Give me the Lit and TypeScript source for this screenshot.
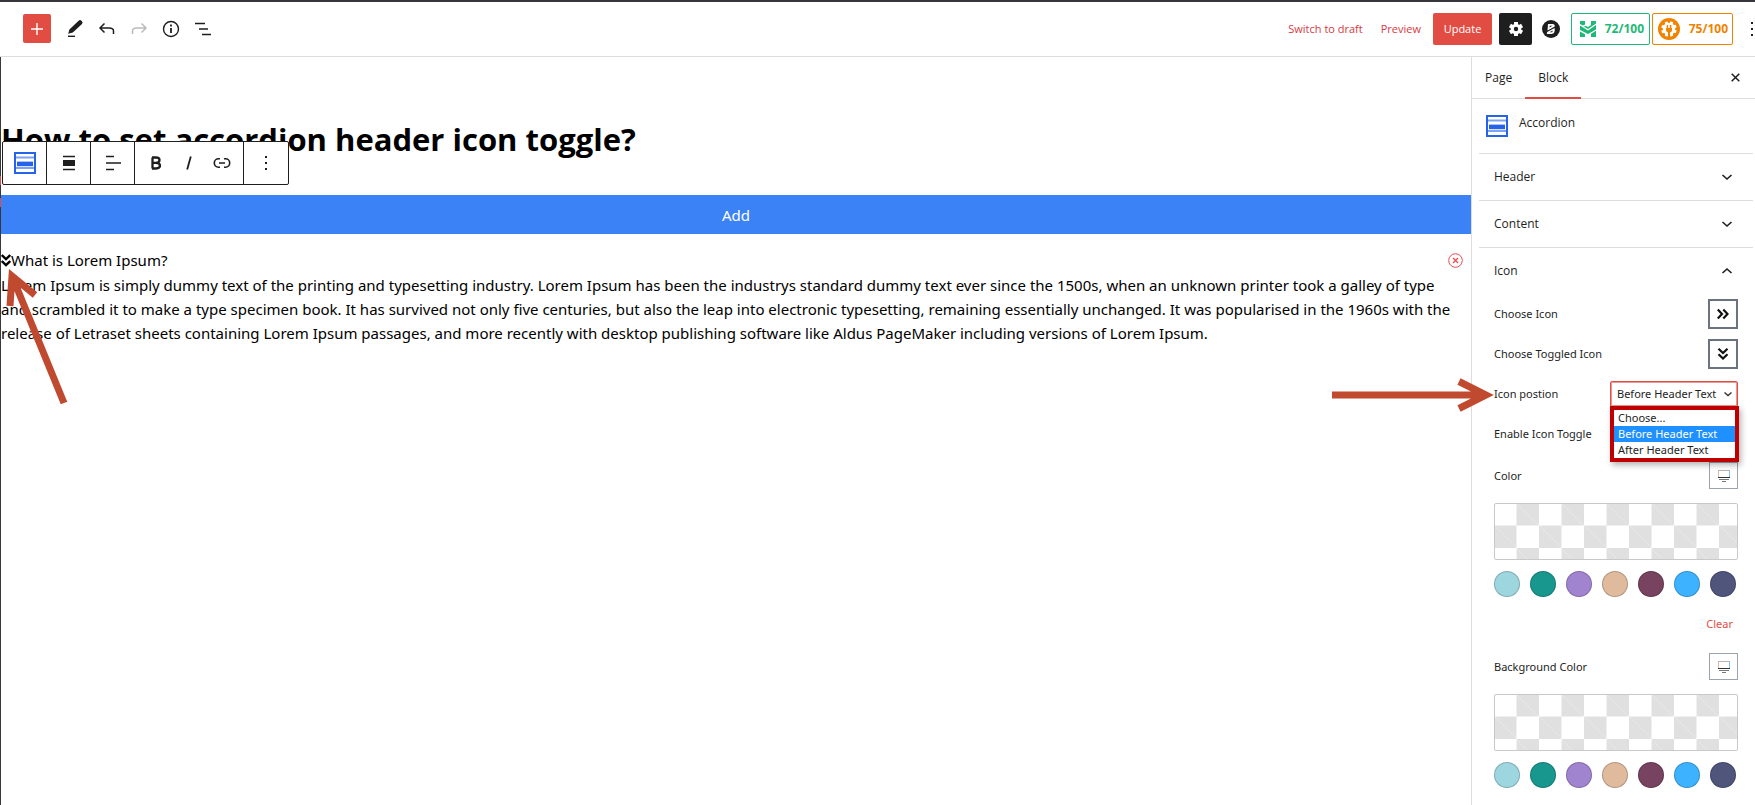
import { LitElement, html, css, svg } from "lit";
import { customElement, property, state } from "lit/decorators.js";
import { classMap } from "lit/directives/class-map.js";

const base = css`
  :host, * { box-sizing: border-box; }
  button {
    font: inherit;
    color: inherit;
    background: none;
    border: 0;
    padding: 0;
    margin: 0;
    display: flex;
    align-items: center;
    justify-content: center;
    cursor: pointer;
  }
  svg { display: block; flex: none; }
`;

const accordionIcon = html`<svg width="22" height="22" viewBox="0 0 22 22" aria-hidden="true">
  <rect x="1" y="1" width="20" height="20" fill="#fff" stroke="#2563eb" stroke-width="2" />
  <path d="M2 5.5h18M2 16h18" stroke="#7ea3f3" stroke-width="2" />
  <path d="M3 9.5h16M3 14h16" stroke="#a9c2f8" stroke-width="1" />
  <rect x="3" y="10" width="16" height="4" fill="#2563eb" />
</svg>`;

const doubleChevron = (down: boolean) => html`<svg width="14" height="14" viewBox="0 0 14 14" aria-hidden="true">
  <g transform=${down ? "rotate(90 7 7)" : ""} fill="none" stroke="#111" stroke-width="2.2">
    <path d="M1.8 2.5 6 7l-4.2 4.5M7.3 2.5 11.5 7l-4.2 4.5" />
  </g>
</svg>`;

const chevron = (up: boolean) => html`<svg width="12" height="12" viewBox="0 0 12 12" aria-hidden="true">
  <path d=${up ? "M1.5 8 6 4l4.5 4" : "M1.5 4 6 8l4.5-4"} fill="none" stroke="#1e1e1e" stroke-width="1.6" />
</svg>`;

const gearTeeth = [0, 60, 120, 180, 240, 300];

@customElement("editor-header")
class EditorHeader extends LitElement {
  static styles = [
    base,
    css`
      :host {
        display: flex;
        align-items: center;
        justify-content: space-between;
        height: 57px;
        padding: 0 0 1px 23px;
        border-top: 2px solid #36383e;
        border-bottom: 1px solid #ddd;
        overflow: hidden;
        font-size: 11px;
        background: #fff;
      }
      .group { display: flex; align-items: center; }
      .tools { gap: 8px; }
      .tool { width: 24px; height: 24px; }
      .add { width: 28px; height: 29px; background: #e14d43; border-radius: 2px; margin-right: 4px; }
      .link { color: #d9393f; text-decoration: none; margin-right: 18px; }
      .link.last { margin-right: 12px; }
      .update { width: 59px; height: 32px; background: #e14d43; color: #fff; border-radius: 2px; margin-right: 7px; }
      .settings { width: 33px; height: 32px; background: #1e1e1e; border-radius: 2px; margin-right: 10px; }
      .brand { margin-right: 11px; }
      .score { height: 32px; border: 1px solid; border-radius: 2px; font-size: 12px; font-weight: 700; justify-content: space-between; }
      .seo { width: 79px; color: #1fb877; padding: 0 5px 0 8px; margin-right: 2px; }
      .rank { width: 81px; color: #f08300; padding: 0 4px 0 5px; }
    `,
  ];

  render() {
    return html`
      <div class="group tools">
        <button class="add" aria-label="Add block">
          <svg width="12" height="12" viewBox="0 0 12 12"><path d="M6 0v12M0 6h12" stroke="#fff" stroke-width="1.4" /></svg>
        </button>
        <button class="tool" aria-label="Edit">
          <svg width="24" height="24" viewBox="0 0 24 24">
            <path d="M5.200 16.800 6.400 12.400 15.600 3.800Q17 2.400 18.700 3.900T19 7L9.800 15.400z" fill="#1e1e1e" />
            <path d="M5 19.300h7" stroke="#1e1e1e" stroke-width="1.4" />
          </svg>
        </button>
        <button class="tool" aria-label="Undo">
          <svg width="24" height="24" viewBox="0 0 24 24"><path d="M9.5 6.5 5 11l4.500 4.500M5.500 11H14Q18.500 11 18.500 14v3" fill="none" stroke="#1e1e1e" stroke-width="1.5" /></svg>
        </button>
        <button class="tool" aria-label="Redo">
          <svg width="24" height="24" viewBox="0 0 24 24"><path d="M14.500 6.500 19 11l-4.500 4.500M18.500 11H10Q5.500 11 5.500 14v3" fill="none" stroke="#bbb" stroke-width="1.5" /></svg>
        </button>
        <button class="tool" aria-label="Details">
          <svg width="24" height="24" viewBox="0 0 24 24">
            <circle cx="12" cy="12" r="7.500" fill="none" stroke="#1e1e1e" stroke-width="1.4" />
            <path d="M12 11v5M12 7.500v2" stroke="#1e1e1e" stroke-width="1.8" />
          </svg>
        </button>
        <button class="tool" aria-label="List view">
          <svg width="24" height="24" viewBox="0 0 24 24"><path d="M4 6.500h10M8 12h9M11 17.500h9" stroke="#1e1e1e" stroke-width="1.5" /></svg>
        </button>
      </div>
      <div class="group">
        <a class="link" href="#draft">Switch to draft</a>
        <a class="link last" href="#preview">Preview</a>
        <button class="update">Update</button>
        <button class="settings" aria-label="Settings">
          <svg width="16" height="16" viewBox="-8 -8 16 16">
            ${gearTeeth.map((a) => svg`<rect x="-2" y="-7" width="4" height="5" fill="#fff" transform="rotate(${a})" />`)}
            <circle r="5.300" fill="#fff" /><circle r="2.200" fill="#1e1e1e" />
          </svg>
        </button>
        <button class="brand" aria-label="Page builder">
          <svg width="18" height="18" viewBox="0 0 18 18">
            <circle cx="9" cy="9" r="9" fill="#1e1e1e" />
            <path d="M6 4h4.500Q13 4.200 12.800 6.500L5.500 10.500zM5.200 12 12.600 8Q13.600 13.500 9.500 14H4.800z" fill="#fff" />
            <path d="M7.800 5.700h2.700L7.500 7.500zM7.500 12.300l3.300-1.800-.6 1.800z" fill="#1e1e1e" />
          </svg>
        </button>
        <button class="score seo" aria-label="SEO score 72 of 100">
          <svg width="16" height="16" viewBox="0 0 16 16" fill="#1fb877">
            <path d="M0 0h5v3.500L3 4.500 0 3zM11 0h5v2.500L8 8 4 5.800 5.500 4.800 8 6l3-2z" />
            <path d="M0 4.500 8 9.500 16 4V8.500L8 13 0 9z" />
            <path d="M0 10.500 5 13.300V16H0zM11 12.800l5-3V16h-5z" />
          </svg>
          <span>72/100</span>
        </button>
        <button class="score rank" aria-label="Content score 75 of 100">
          <svg width="22" height="22" viewBox="-11 -11 22 22">
            <circle r="11" fill="#f08300" />
            ${[22, 67, 112, 157, 202, 247, 292, 337].map(
              (a) => svg`<rect x="-1.500" y="-7.800" width="3" height="4" rx=".6" fill="#fff" transform="rotate(${a})" />`
            )}
            <circle r="6.200" fill="#fff" />
            <path d="M-3-1H3V1Q3 3 1 3.500V7H-1V3.500Q-3 3-3 1zM-2.300-4h1.500v3h-1.500zM.8-4h1.500v3H.8z" fill="#f08300" />
          </svg>
          <span>75/100</span>
        </button>
        <button aria-label="Options">
          <svg width="22" height="16" viewBox="0 0 22 16"><path d="M18 1h2v2h-2zM18 7h2v2h-2zM18 13h2v2h-2z" fill="#1e1e1e" /></svg>
        </button>
      </div>
    `;
  }
}

@customElement("block-toolbar")
class BlockToolbar extends LitElement {
  static styles = [
    base,
    css`
      :host {
        display: flex;
        height: 44px;
        background: #fff;
        border: 1px solid #1e1e1e;
        border-radius: 2px;
      }
      .cell { width: 44px; display: flex; align-items: center; justify-content: center; border-right: 1px solid #1e1e1e; }
      .cell:last-child { border-right: 0; }
      .format { width: 109px; padding: 0 5px; }
      .format button { width: 33px; height: 36px; }
    `,
  ];

  render() {
    return html`
      <button class="cell" aria-label="Accordion">${accordionIcon}</button>
      <button class="cell" aria-label="Align">
        <svg width="24" height="24" viewBox="0 0 24 24"><path d="M6 5.500h12M6 18.500h12" stroke="#1e1e1e" stroke-width="1.400" /><path d="M6 9h12v6H6z" fill="#1e1e1e" /></svg>
      </button>
      <button class="cell" aria-label="Align text">
        <svg width="24" height="24" viewBox="0 0 24 24"><path d="M5 5.500h8M5 12h15M5 18.500h8" stroke="#1e1e1e" stroke-width="1.400" /></svg>
      </button>
      <div class="cell format">
        <button aria-label="Bold">
          <svg width="24" height="24" viewBox="0 0 24 24"><path d="M8.500 6.500V17.500M8 6.500h4Q15.500 6.500 15.500 9.100T12 11.800H8.500M12 11.800Q16 11.800 16 14.600T12 17.500H8" fill="none" stroke="#1e1e1e" stroke-width="2.300" /></svg>
        </button>
        <button aria-label="Italic">
          <svg width="24" height="24" viewBox="0 0 24 24"><path d="M13.800 5.500 10.200 18.500" stroke="#1e1e1e" stroke-width="1.800" /></svg>
        </button>
        <button aria-label="Link">
          <svg width="24" height="24" viewBox="0 0 24 24"><path d="M10 7.800H8.500a4.200 4.200 0 0 0 0 8.400H10M14 7.800h1.500a4.200 4.200 0 0 1 0 8.400H14M9 12h6" fill="none" stroke="#1e1e1e" stroke-width="1.600" /></svg>
        </button>
      </div>
      <button class="cell" aria-label="More options">
        <svg width="4" height="14" viewBox="0 0 4 14"><path d="M1 0h2v2H1zM1 6h2v2H1zM1 12h2v2H1z" fill="#1e1e1e" /></svg>
      </button>
    `;
  }
}

@customElement("editor-canvas")
class EditorCanvas extends LitElement {
  static styles = [
    base,
    css`
      :host { display: block; border-left: 1px solid #36383e; color: #000; font-size: 15px; line-height: 24px; font-family: "Noto Sans", "Open Sans", sans-serif; }
      .heading { position: relative; padding-top: 60px; height: 138px; }
      .title { margin: 0; font-family: "Open Sans", "Noto Sans", sans-serif; font-size: 31px; line-height: 44px; font-weight: 700; white-space: nowrap; }
      .toolbar { position: absolute; left: 1px; top: 84px; }
      .mark { position: absolute; left: -1px; width: 1px; height: 9px; background: #e14d43; }
      .mark.first { top: 119px; }
      .mark.second { top: 141px; }
      .add { width: 100%; height: 39px; background: #3b82f6; color: #fff; }
      .item { position: relative; padding-top: 14px; }
      .question { display: flex; align-items: center; }
      .remove { margin-left: auto; margin-right: 8px; }
      .answer { margin: 1px 0 0; white-space: nowrap; }
      .arrow { position: absolute; left: 4px; top: 32px; }
    `,
  ];

  render() {
    return html`
      <div class="heading">
        <h1 class="title">How to set accordion header icon toggle?</h1>
        <block-toolbar class="toolbar"></block-toolbar>
        <span class="mark first"></span>
        <span class="mark second"></span>
      </div>
      <button class="add">Add</button>
      <section class="item">
        <div class="question">
          <svg width="10" height="14" viewBox="0 0 10 14" aria-hidden="true">
            <path d="M.8 2 5 6l4.200-4M.8 8 5 12l4.200-4" fill="none" stroke="#000" stroke-width="2.400" />
          </svg>
          <span>What is Lorem Ipsum?</span>
          <button class="remove" aria-label="Remove item">
            <svg width="15" height="15" viewBox="0 0 15 15"><circle cx="7.500" cy="7.500" r="6.800" fill="none" stroke="#ea4b50" /><path d="m5 5 5 5M10 5l-5 5" stroke="#ea4b50" stroke-width="1.300" /></svg>
          </button>
        </div>
        <p class="answer">
          Lorem Ipsum is simply dummy text of the printing and typesetting industry. Lorem Ipsum has been the industrys standard dummy text ever since the 1500s, when an unknown printer took a galley of type<br />
          and scrambled it to make a type specimen book. It has survived not only five centuries, but also the leap into electronic typesetting, remaining essentially unchanged. It was popularised in the 1960s with the<br />
          release of Letraset sheets containing Lorem Ipsum passages, and more recently with desktop publishing software like Aldus PageMaker including versions of Lorem Ipsum.
        </p>
        <svg class="arrow" width="70" height="140" viewBox="0 0 70 140" aria-hidden="true">
          <path d="M59 137 7 10M5 40 7 10 30 29" fill="none" stroke="#c04a30" stroke-width="7" stroke-miterlimit="10" />
        </svg>
      </section>
    `;
  }
}

@customElement("color-field")
class ColorField extends LitElement {
  @property() label = "";
  @property({ type: Boolean }) clearable = false;

  private swatches = ["#9dd6df", "#18978f", "#a084cf", "#dfba9d", "#774360", "#3db2ff", "#50557c"];

  static styles = [
    base,
    css`
      :host { display: block; }
      .top { display: flex; align-items: center; justify-content: space-between; }
      .device { width: 29px; height: 27px; border: 1px solid #9ca3af; }
      .preview {
        width: 100%;
        height: 57px;
        margin: 14px 0 11px;
        border: 1px solid #c9c9c9;
        border-radius: 2px;
        background-origin: border-box;
        background-image:
          repeating-linear-gradient(45deg, #e0e0e0 25%, transparent 0, transparent 75%, #e0e0e0 0, #e0e0e0),
          repeating-linear-gradient(45deg, #e0e0e0 25%, transparent 0, transparent 75%, #e0e0e0 0, #e0e0e0);
        background-size: 45px 45px;
        background-position: 0 0, calc(45px / 2) calc(45px / 2);
      }
      .swatches { display: flex; gap: 10px; }
      .swatch { width: 26px; height: 26px; flex: none; border-radius: 50%; border: 1px solid rgba(0, 0, 0, 0.2); }
      .clear { margin: 15px 5px 0 auto; height: 24px; color: #e14d43; }
    `,
  ];

  render() {
    return html`
      <div class="top">
        <span>${this.label}</span>
        <button class="device" aria-label="Desktop">
          <svg width="14" height="14" viewBox="0 0 14 14">
            <path d="M1.500 1v8" stroke="#e2b9a0" /><path d="M12.500 1v8" stroke="#7cc3e6" /><path d="M1 1.500h12" stroke="#b9b3b3" />
            <path d="M1 8.500h12" stroke="#333" /><path d="M2 10.500h10M5 12.500h4" stroke="#777" />
          </svg>
        </button>
      </div>
      <button class="preview" aria-label="${this.label} picker"></button>
      <div class="swatches">
        ${this.swatches.map((c) => html`<button class="swatch" aria-label=${c} style="background:${c}"></button>`)}
      </div>
      ${this.clearable ? html`<button class="clear">Clear</button>` : ""}
    `;
  }
}

@customElement("block-settings")
class BlockSettings extends LitElement {
  @state() private position = "Before Header Text";
  private options = ["Choose...", "Before Header Text", "After Header Text"];

  static styles = [
    base,
    css`
      :host { display: block; border-left: 1px solid #ddd; font-size: 12px; line-height: 16px; color: #1e1e1e; background: #fff; }
      .tabs { display: flex; height: 42px; border-bottom: 1px solid #ddd; }
      .tab { padding: 0 13px; }
      .tab.active { border-bottom: 2px solid #e14d43; border-top: 2px solid transparent; height: 42px; }
      .close { margin-left: auto; padding: 0 15px; }
      .card { display: flex; gap: 11px; height: 55px; margin: 0 2px 0 7px; padding: 16px 7px; border-bottom: 1px solid #ddd; }
      .section { margin: 0 2px 0 7px; border-bottom: 1px solid #ddd; }
      .section.open { border-bottom: 0; }
      .heading { width: 100%; height: 46px; padding: 0 20px 0 15px; justify-content: space-between; }
      .fields { padding: 0 15px 16px 15px; font-family: "Noto Sans", "Open Sans", sans-serif; font-size: 11px; }
      .field { position: relative; display: flex; align-items: center; justify-content: space-between; height: 40px; }
      .pick { width: 30px; height: 30px; border: 2px solid #6b7280; }
      .control { position: relative; display: flex; align-items: center; width: 128px; }
      .select {
        appearance: none;
        width: 100%;
        height: 26px;
        padding: 0 20px 0 6px;
        border: 1px solid #e14d43;
        border-radius: 2px;
        box-shadow: inset 0 0 0 1px #e99a94;
        background: #fff;
        color: #1e1e1e;
        font: inherit;
      }
      .caret { position: absolute; right: 5px; pointer-events: none; }
      .options {
        position: absolute;
        z-index: 1;
        top: 100%;
        left: 0;
        width: 129px;
        margin: -1px 0 0;
        padding: 0;
        list-style: none;
        border: 4px solid #c00000;
        background: #fff;
        box-shadow: 2px 3px 6px rgba(0, 0, 0, 0.3);
        line-height: 16px;
      }
      .option { padding: 0 4px; white-space: nowrap; }
      .option.selected { background: #1e90ff; color: #fff; }
      .arrow { position: absolute; right: 100%; top: 4px; }
      .color { margin-top: 8px; }
      .color.next { margin-top: 17px; }
    `,
  ];

  render() {
    return html`
      <div class="tabs">
        <button class="tab">Page</button>
        <button class="tab active">Block</button>
        <button class="close" aria-label="Close settings">
          <svg width="9" height="9" viewBox="0 0 9 9"><path d="m.7.7 7.600 7.600M8.300.7.7 8.300" stroke="#1e1e1e" stroke-width="1.500" /></svg>
        </button>
      </div>
      <div class="card">${accordionIcon}<span>Accordion</span></div>
      <section class="section"><button class="heading">Header ${chevron(false)}</button></section>
      <section class="section"><button class="heading">Content ${chevron(false)}</button></section>
      <section class="section open">
        <button class="heading">Icon ${chevron(true)}</button>
        <div class="fields">
          <div class="field"><span>Choose Icon</span><button class="pick" aria-label="Choose Icon">${doubleChevron(false)}</button></div>
          <div class="field"><span>Choose Toggled Icon</span><button class="pick" aria-label="Choose Toggled Icon">${doubleChevron(true)}</button></div>
          <div class="field">
            <label for="position">Icon postion</label>
            <svg class="arrow" width="162" height="34" viewBox="0 0 162 34" aria-hidden="true">
              <path d="M0 17h152M127 3.500 154 17 127 30.500" fill="none" stroke="#c04a30" stroke-width="7" stroke-miterlimit="10" />
            </svg>
            <div class="control">
              <select class="select" id="position" .value=${this.position}
                @change=${(e: Event) => (this.position = (e.target as HTMLSelectElement).value)}>
                ${this.options.map((o) => html`<option ?selected=${o === this.position}>${o}</option>`)}
              </select>
              <svg class="caret" width="10" height="10" viewBox="0 0 10 10" aria-hidden="true"><path d="M1.500 3.500 5 6.500l3.500-3" fill="none" stroke="#333" stroke-width="1.400" /></svg>
              <ul class="options" role="listbox" aria-label="Icon postion">
                ${this.options.map(
                  (o) => html`<li role="option" class=${classMap({ option: true, selected: o === this.position })}
                    @click=${() => (this.position = o)}>${o}</li>`
                )}
              </ul>
            </div>
          </div>
          <div class="field"><span>Enable Icon Toggle</span></div>
          <color-field class="color" label="Color" clearable></color-field>
          <color-field class="color next" label="Background Color"></color-field>
        </div>
      </section>
    `;
  }
}

@customElement("app-root")
class AppRoot extends LitElement {
  static styles = css`
    :host {
      display: flex;
      flex-direction: column;
      min-height: 100vh;
      background: #fff;
      font-family: "Open Sans", "Noto Sans", sans-serif;
    }
    .body { flex: 1; display: grid; grid-template-columns: minmax(0, 1fr) 284px; }
  `;

  render() {
    return html`
      <editor-header></editor-header>
      <main class="body">
        <editor-canvas></editor-canvas>
        <block-settings></block-settings>
      </main>
    `;
  }
}
